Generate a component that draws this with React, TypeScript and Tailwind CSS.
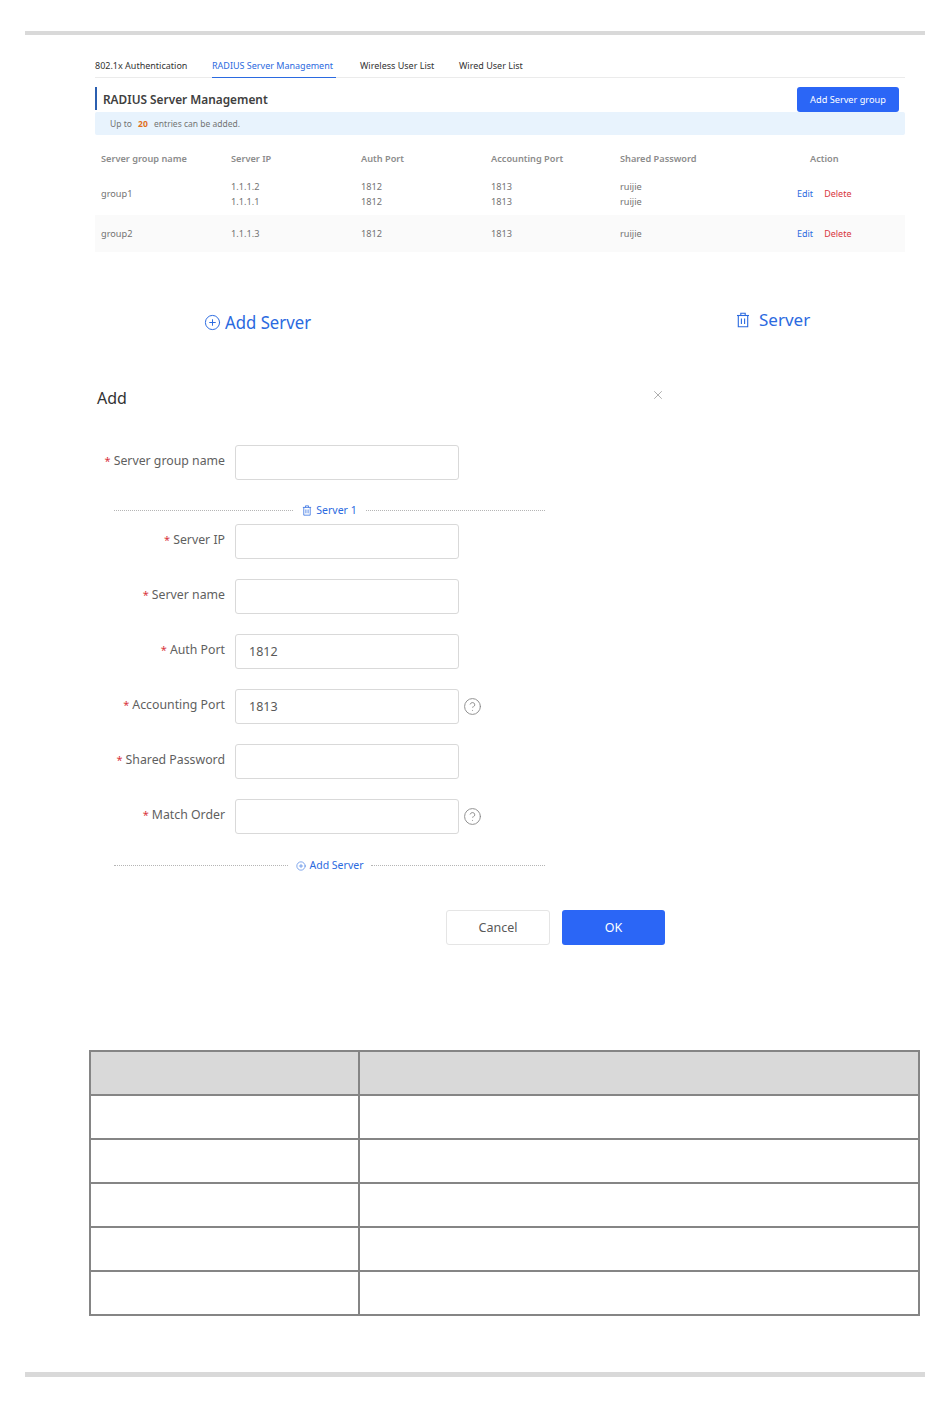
import { CircleHelp, CirclePlus, X } from "lucide-react";

const serverFields = [
  { label: "Server IP", value: "", top: "mt-[7px]" },
  { label: "Server name", value: "", top: "mt-[20px]" },
  { label: "Auth Port", value: "1812", top: "mt-[20px]" },
  { label: "Accounting Port", value: "1813", top: "mt-[20px]", help: true },
  { label: "Shared Password", value: "", top: "mt-[20px]" },
  { label: "Match Order", value: "", top: "mt-[20px]", help: true },
];

function TrashIcon({ className }: { className: string }) {
  return (
    <svg viewBox="0 0 14 16" fill="none" stroke="currentColor" strokeWidth="1.1" className={className}>
      <path d="M1 3.5h12" />
      <path d="M4.8 3.5V1.2h4.4v2.3" />
      <path d="M2.3 3.5v11.3h9.4V3.5" />
      <path d="M5.4 6.5v5.6M8.6 6.5v5.6" />
    </svg>
  );
}

function FormRow({ label, value, top, help }: { label: string; value: string; top: string; help?: boolean }) {
  return (
    <div className={`flex items-center h-[35px] ${top}`}>
      <label className="w-[130px] pb-[3px] text-right text-[12.3px] whitespace-nowrap text-[#5f5f5f]">
        <span className="text-[#d9363e] mr-[3px] text-[11px]">*</span>
        {label}
      </label>
      <input
        readOnly
        defaultValue={value}
        className="ml-[10px] w-[224px] h-full rounded-[3px] border border-[#d9d9d9] bg-white pl-[13px] text-[12.5px] text-[#595959] outline-none"
      />
      {help && <CircleHelp className="ml-[4px] w-[19px] h-[19px] text-[#8c8c8c]" strokeWidth={1.2} />}
    </div>
  );
}

function DashedDivider({ left, right, children }: { left: string; right: string; children: React.ReactNode }) {
  return (
    <div className="flex items-center w-[431px] ml-[19px] h-[14px]">
      <div className={`${left} border-t border-dotted border-[#b5b5b5]`} />
      <div className="flex-1 flex items-center justify-center gap-[4px] pt-[1px] text-[10.5px] text-[#2b6ae0]">{children}</div>
      <div className={`${right} border-t border-dotted border-[#b5b5b5]`} />
    </div>
  );
}

const rows = [
  { name: "group1", ips: ["1.1.1.2", "1.1.1.1"], auth: ["1812", "1812"], acct: ["1813", "1813"], pass: ["ruijie", "ruijie"] },
  { name: "group2", ips: ["1.1.1.3"], auth: ["1812"], acct: ["1813"], pass: ["ruijie"] },
];

function Stack({ items }: { items: string[] }) {
  return (
    <div className="leading-[15px]">
      {items.map((item, i) => (
        <div key={i}>{item}</div>
      ))}
    </div>
  );
}

export default function App() {
  return (
    <div className="w-[950px] h-[1408px] bg-white pt-[31px] overflow-hidden font-['Noto_Sans',sans-serif]">
      <div className="h-[4px] mx-[25px] bg-[#d9d9d9]" />

      <div className="ml-[95px] w-[810px]">
        {/* Tabs */}
        <div className="mt-[23px] h-[20px] flex border-b border-[#ebebeb] text-[9px] whitespace-nowrap text-[#333]">
          <div className="w-[117px] leading-[16px]">802.1x Authentication</div>
          <div className="w-[124px] h-[20px] leading-[16px] text-[#2b6ae0] border-b border-[#2b6ae0]">RADIUS Server Management</div>
          <div className="ml-[24px] w-[99px] leading-[16px]">Wireless User List</div>
          <div className="leading-[16px]">Wired User List</div>
        </div>

        {/* Title */}
        <div className="mt-[9px] flex justify-between h-[25px] pr-[6px]">
          <div className="h-[23px] border-l-2 border-[#2b5fb0] pl-[6px] text-[11.85px] font-semibold leading-[25px] text-[#404040]">
            RADIUS Server Management
          </div>
          <div className="w-[102px] rounded-[3px] bg-[#2b66f6] text-center text-[9.2px] leading-[25px] text-white">Add Server group</div>
        </div>

        <div className="h-[23px] rounded-[2px] bg-[#e8f3fd] pl-[15px] text-[8.5px] leading-[23px] text-[#737373]">
          Up to <span className="mx-[4px] font-bold text-[#e0701f]">20</span> entries can be added.
        </div>

        {/* Table */}
        <div className="mt-[11px] h-[26px] pb-[1px] grid grid-cols-[130px_130px_130px_129px_177px_1fr] items-center pl-[6px] text-[9.2px] font-semibold text-[#8c8c8c]">
          <div>Server group name</div>
          <div>Server IP</div>
          <div>Auth Port</div>
          <div>Accounting Port</div>
          <div>Shared Password</div>
          <div className="ml-[13px]">Action</div>
        </div>
        {rows.map((row, i) => (
          <div
            key={row.name}
            className={`grid grid-cols-[130px_130px_130px_129px_177px_1fr] items-center pl-[6px] text-[9.2px] text-[#737373] ${
              i === 1 ? "h-[37px] bg-[#fafafa]" : "h-[43px]"
            }`}
          >
            <div>{row.name}</div>
            <Stack items={row.ips} />
            <Stack items={row.auth} />
            <Stack items={row.acct} />
            <Stack items={row.pass} />
            <div className="flex gap-[11px] text-[9px]">
              <span className="text-[#2b6ae0]">Edit</span>
              <span className="text-[#d9363e]">Delete</span>
            </div>
          </div>
        ))}
      </div>

      {/* Button samples */}
      <div className="mt-[56px] h-[28px] flex text-[#2b6ae0]">
        <div className="ml-[204px] w-[532px] flex items-center gap-[4px] text-[18px]">
          <CirclePlus className="w-[17px] h-[17px]" strokeWidth={1.4} />
          <span className="origin-left scale-x-[0.93]">Add Server</span>
        </div>
        <div className="h-[24px] flex items-center gap-[9px] text-[17px]">
          <TrashIcon className="w-[14px] h-[16px]" />
          Server
        </div>
      </div>

      {/* Add dialog */}
      <div className="w-[570px] ml-[95px] mt-[46px]">
        <div className="flex items-start justify-between pl-[2px] h-[40px]">
          <div className="text-[16px] leading-[24px] text-[#333] mt-[4px]">Add</div>
          <X className="mt-[6px] w-[14px] h-[14px] text-[#8c8c8c]" strokeWidth={1.2} />
        </div>

        <div className="mt-[23px]">
          <FormRow label="Server group name" value="" top="" />
        </div>

        <div className="mt-[23px]">
          <DashedDivider left="w-[179px]" right="w-[179px]">
            <TrashIcon className="w-[10px] h-[11px]" />
            Server 1
          </DashedDivider>
        </div>

        {serverFields.map((field) => (
          <FormRow key={field.label} {...field} />
        ))}

        <div className="mt-[24px]">
          <DashedDivider left="w-[174px]" right="w-[174px]">
            <CirclePlus className="w-[10px] h-[10px]" strokeWidth={1.4} />
            Add Server
          </DashedDivider>
        </div>

        <div className="mt-[38px] flex justify-end gap-[12px] text-[12.5px]">
          <div className="w-[104px] h-[35px] rounded-[3px] border border-[#e5e5e5] text-center leading-[33px] text-[#595959]">Cancel</div>
          <div className="w-[103px] h-[35px] rounded-[3px] bg-[#2b66f6] text-center leading-[35px] text-white">OK</div>
        </div>
      </div>

      {/* Empty parameter table */}
      <table className="mt-[105px] ml-[89px] w-[831px] table-fixed border-collapse">
        <colgroup>
          <col className="w-[269px]" />
          <col />
        </colgroup>
        <tbody>
          {[0, 1, 2, 3, 4, 5].map((i) => (
            <tr key={i} className={`h-[44px] ${i === 0 ? "bg-[#d9d9d9]" : ""}`}>
              <td className="border-2 border-[#858585]" />
              <td className="border-2 border-[#858585]" />
            </tr>
          ))}
        </tbody>
      </table>

      <div className="mt-[56px] h-[5px] mx-[25px] bg-[#d9d9d9]" />
    </div>
  );
}
